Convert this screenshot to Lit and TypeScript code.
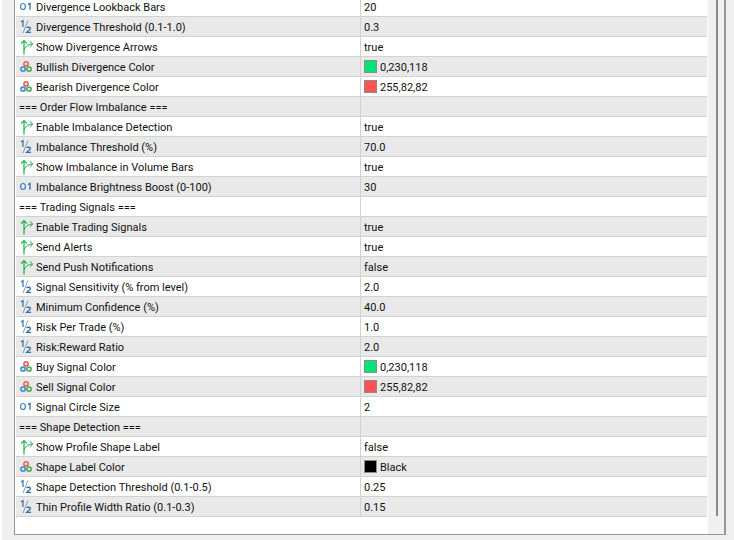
import { LitElement, html, css, svg } from "lit";
import { customElement } from "lit/decorators.js";

type Kind = "int" | "dbl" | "bool" | "color" | "none";
type Row = { k: Kind; n: string; v: string; c?: string };

const rows: Row[] = [
  { k: "int", n: "Divergence Lookback Bars", v: "20" },
  { k: "dbl", n: "Divergence Threshold (0.1-1.0)", v: "0.3" },
  { k: "bool", n: "Show Divergence Arrows", v: "true" },
  { k: "color", n: "Bullish Divergence Color", v: "0,230,118", c: "#00e676" },
  { k: "color", n: "Bearish Divergence Color", v: "255,82,82", c: "#ff5252" },
  { k: "none", n: "=== Order Flow Imbalance ===", v: "" },
  { k: "bool", n: "Enable Imbalance Detection", v: "true" },
  { k: "dbl", n: "Imbalance Threshold (%)", v: "70.0" },
  { k: "bool", n: "Show Imbalance in Volume Bars", v: "true" },
  { k: "int", n: "Imbalance Brightness Boost (0-100)", v: "30" },
  { k: "none", n: "=== Trading Signals ===", v: "" },
  { k: "bool", n: "Enable Trading Signals", v: "true" },
  { k: "bool", n: "Send Alerts", v: "true" },
  { k: "bool", n: "Send Push Notifications", v: "false" },
  { k: "dbl", n: "Signal Sensitivity (% from level)", v: "2.0" },
  { k: "dbl", n: "Minimum Confidence (%)", v: "40.0" },
  { k: "dbl", n: "Risk Per Trade (%)", v: "1.0" },
  { k: "dbl", n: "Risk:Reward Ratio", v: "2.0" },
  { k: "color", n: "Buy Signal Color", v: "0,230,118", c: "#00e676" },
  { k: "color", n: "Sell Signal Color", v: "255,82,82", c: "#ff5252" },
  { k: "int", n: "Signal Circle Size", v: "2" },
  { k: "none", n: "=== Shape Detection ===", v: "" },
  { k: "bool", n: "Show Profile Shape Label", v: "false" },
  { k: "color", n: "Shape Label Color", v: "Black", c: "#000000" },
  { k: "dbl", n: "Shape Detection Threshold (0.1-0.5)", v: "0.25" },
  { k: "dbl", n: "Thin Profile Width Ratio (0.1-0.3)", v: "0.15" },
];

const icons: Record<Kind, unknown> = {
  int: svg`<ellipse cx="5" cy="7.5" rx="2.4" ry="3" fill="none" stroke="#3b7fc0" stroke-width="1.2"/>
    <path d="M10 5.6 L12 4.4 V10.8" fill="none" stroke="#2f6fb0" stroke-width="1.3"/>`,
  dbl: svg`<path d="M3 3 L5 1.6 V8" fill="none" stroke="#2f6fb0" stroke-width="1.2"/>
    <path d="M10 1.5 L5 14" fill="none" stroke="#8a9aa8" stroke-width="1"/>
    <path d="M8.6 9 C9.3 7.9 12.4 7.9 12.4 9.6 C12.4 11 10 11.8 8.6 13.4 H13" fill="none" stroke="#2f6fb0" stroke-width="1.3"/>`,
  bool: svg`<path d="M6 15.5 V1.5 M3 4.6 L6 1.5 L9 4.6" fill="none" stroke="#17b04a" stroke-width="1.2"/>
    <path d="M6 11 C7 8 9.5 5.5 14.5 5 M12 2.6 L14.8 5 L12 7.6" fill="none" stroke="#17b04a" stroke-width="1"/>`,
  color: svg`<circle cx="8" cy="4.8" r="2.2" fill="#f6d5d0" stroke="#d9534a" stroke-width="1.3"/>
    <circle cx="5" cy="10" r="2.2" fill="#cfe2f3" stroke="#2f7fc6" stroke-width="1.3"/>
    <circle cx="11" cy="10" r="2.2" fill="#d3ecd3" stroke="#3f9a4a" stroke-width="1.3"/>`,
  none: svg``,
};

@customElement("app-root")
export class AppRoot extends LitElement {
  static styles = css`
    :host {
      display: block;
      width: 734px;
      height: 540px;
      overflow: hidden;
      background: #f0f0f0;
      font-family: Roboto, "Liberation Sans", sans-serif;
      font-size: 11px;
      color: #111;
    }
    .edge {
      height: 540px;
      padding-left: 2px;
      background: #fff;
    }
    .page {
      height: 540px;
      background: #f0f0f0;
      padding-left: 12px;
      padding-right: 8px;
      padding-bottom: 5px;
      box-sizing: border-box;
    }
    .panel {
      height: 535px;
      box-sizing: border-box;
      border: solid #8e9aa3;
      border-width: 0 2px 1px 1px;
      background: #fff;
      display: flex;
      padding-left: 1px;
      overflow: hidden;
    }
    .table {
      width: 691px;
      margin-top: -3px;
      flex: none;
    }
    .bar {
      width: 17px;
      margin-left: 1px;
      flex: none;
      background: #f0f0f0;
      display: flex;
      justify-content: center;
      height: 534px;
    }
    .thumb {
      width: 2px;
      height: 516px;
      background: #8a8a8a;
    }
    .row {
      display: grid;
      grid-template-columns: 345px 1fr;
      height: 20px;
      box-sizing: border-box;
      border-bottom: 1px solid #d2d2d2;
      background: #fff;
    }
    .row.alt {
      background: #e9e9e9;
    }
    .name {
      display: flex;
      align-items: center;
      gap: 2px;
      padding-left: 2px;
      border-right: 1px solid #d2d2d2;
      white-space: nowrap;
    }
    .name.plain {
      padding-left: 3px;
    }
    .icon {
      width: 16px;
      height: 16px;
      flex: none;
    }
    .value {
      display: flex;
      align-items: center;
      padding-left: 3px;
      gap: 3px;
      white-space: nowrap;
    }
    .t {
      padding-top: 2px;
    }
    .swatch {
      width: 13px;
      height: 13px;
      box-sizing: border-box;
      border: 1px solid #8c8c8c;
      flex: none;
    }
  `;

  render() {
    return html`<div class="edge"><div class="page"><div class="panel">
      <div class="table">
        ${rows.map(
          (r, i) => html`<div class="row ${i % 2 ? "alt" : ""}">
            <div class="name ${r.k === "none" ? "plain" : ""}">
              ${r.k === "none"
                ? ""
                : html`<svg class="icon" viewBox="0 0 16 16">${icons[r.k]}</svg>`}
              <span class="t">${r.n}</span>
            </div>
            <div class="value">
              ${r.c ? html`<span class="swatch" style="background:${r.c}"></span>` : ""}
              <span class="t">${r.v}</span>
            </div>
          </div>`
        )}
      </div>
      <div class="bar"><div class="thumb"></div></div>
    </div></div></div>`;
  }
}
